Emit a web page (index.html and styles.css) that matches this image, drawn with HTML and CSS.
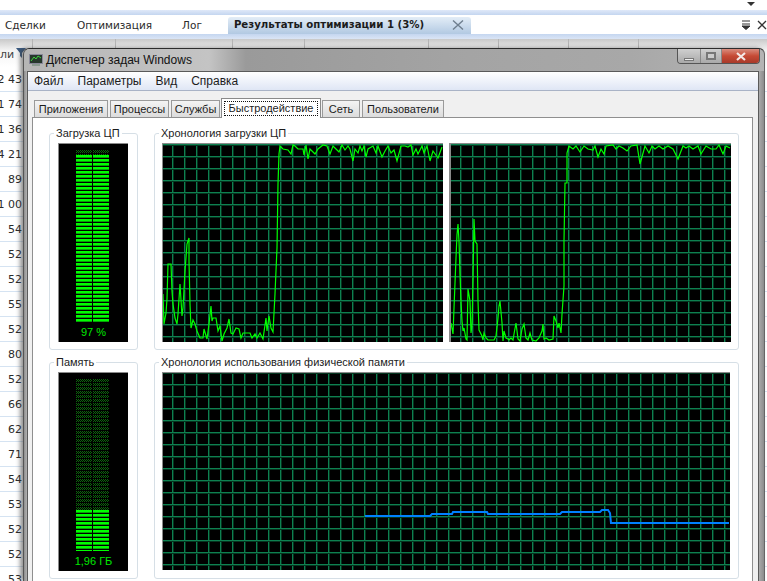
FILE: index.html
```html
<!DOCTYPE html>
<html lang="ru">
<head>
<meta charset="utf-8">
<title>Диспетчер задач Windows</title>
<link rel="stylesheet" href="styles.css">
</head>
<body>
<div class="app">
  <div class="app-top"><span class="tri"></span></div>
  <div class="band"></div>
  <div class="doc-tabs">
    <span class="doc-tab first">Сделки</span>
    <span class="doc-tab second">Оптимизация</span>
    <span class="doc-tab third">Лог</span>
    <span class="doc-tab active">Результаты оптимизации 1 (3%)<svg class="tab-x" width="12" height="10" viewBox="0 0 12 10"><path d="M1 0.5L11 9.5M11 0.5L1 9.5" stroke="#6f7f8f" stroke-width="1.4" fill="none"/></svg></span>
    <span class="doc-tools">
      <svg width="10" height="10" viewBox="0 0 10 10"><path d="M1 1H9M1 4H9M1 6L5 9.5L9 6Z" stroke="#333" fill="#333"/></svg>
      <svg width="10" height="10" viewBox="0 0 10 10"><path d="M1 1L9 9M9 1L1 9" stroke="#333" stroke-width="1.3" fill="none"/></svg>
    </span>
  </div>
  <div class="band lower"></div>
  <div class="thead">
    <span class="th c1"><span class="th-label">ли</span><svg class="filter" width="10" height="10" viewBox="0 0 10 10"><path d="M0 0H10L6 5V10L4 8V5Z"/></svg></span>
    <span class="th c2"><svg class="filter" width="10" height="10" viewBox="0 0 10 10"><path d="M0 0H10L6 5V10L4 8V5Z"/></svg></span>
    <span class="th c3"><svg class="filter" width="10" height="10" viewBox="0 0 10 10"><path d="M0 0H10L6 5V10L4 8V5Z"/></svg></span>
    <span class="th c4"><svg class="filter" width="10" height="10" viewBox="0 0 10 10"><path d="M0 0H10L6 5V10L4 8V5Z"/></svg></span>
    <span class="th c5"><svg class="filter" width="10" height="10" viewBox="0 0 10 10"><path d="M0 0H10L6 5V10L4 8V5Z"/></svg></span>
    <span class="th c6"><svg class="filter" width="10" height="10" viewBox="0 0 10 10"><path d="M0 0H10L6 5V10L4 8V5Z"/></svg></span>
    <span class="th c6"><svg class="filter" width="10" height="10" viewBox="0 0 10 10"><path d="M0 0H10L6 5V10L4 8V5Z"/></svg></span>
    <span class="th c6"><svg class="filter" width="10" height="10" viewBox="0 0 10 10"><path d="M0 0H10L6 5V10L4 8V5Z"/></svg></span>
  </div>
  <div class="rows">
    <div class="row">2 43</div><div class="row">1 74</div><div class="row">1 36</div><div class="row">4 21</div>
    <div class="row">89</div><div class="row">1 00</div><div class="row">54</div><div class="row">52</div>
    <div class="row">52</div><div class="row">55</div><div class="row">52</div><div class="row">80</div>
    <div class="row">52</div><div class="row">66</div><div class="row">62</div><div class="row">71</div>
    <div class="row">54</div><div class="row">53</div><div class="row">52</div><div class="row">52</div>
    <div class="row">53</div>
  </div>
</div>

<div class="window">
  <div class="titlebar">
    <svg class="win-icon" width="14" height="14" viewBox="0 0 14 14"><rect x="0.5" y="1.5" width="13" height="9" fill="#26382c" stroke="#889"/><path d="M2 8L5 4L7 6L9 3L12 5" stroke="#3dd43d" fill="none"/><rect x="3" y="11" width="8" height="2" fill="#8a9a90"/></svg>
    <span class="win-title">Диспетчер задач Windows</span>
    <div class="caption">
      <span class="cap cap-min"><i></i></span>
      <span class="cap cap-max"><i></i></span>
      <span class="cap cap-close"><svg width="12" height="9" viewBox="0 0 12 9"><path d="M2 1L10 8M10 1L2 8" stroke="#f4e8e6" stroke-width="2.2" fill="none"/></svg></span>
    </div>
  </div>
  <div class="client">
    <div class="menubar"><span>Файл</span><span>Параметры</span><span>Вид</span><span>Справка</span></div>
    <div class="tabstrip">
      <span class="tab t1">Приложения</span>
      <span class="tab t2">Процессы</span>
      <span class="tab t3">Службы</span>
      <span class="tab t4 selected"><span class="focus">Быстродействие</span></span>
      <span class="tab t5">Сеть</span>
      <span class="tab t6">Пользователи</span>
    </div>
    <div class="panel">
      <fieldset class="group meter-group">
        <legend>Загрузка ЦП</legend>
        <div class="meter">
          <div class="bars">
            <div class="bar"><div class="dim" style="height:6px"></div><div class="lit"></div></div>
            <div class="bar"><div class="dim" style="height:6px"></div><div class="lit"></div></div>
          </div>
          <div class="meter-value">97 %</div>
        </div>
      </fieldset>
      <fieldset class="group graph-group">
        <legend>Хронология загрузки ЦП</legend>
        <div class="graph-pair">
          <div class="graph cpu one">
            <svg width="280" height="198" viewBox="163 143 280 198"><polyline class="cpu-line" points="163,293 164,323 166,312 167,298 168,263 171,263 172,290 173,303 175,317 177,323 178,313 180,283 182,315 183,307 185,270 187,243 189,237 189,260 190,303 191,327 193,319 195,323 197,330 200,337 203,337 204,328 207,338 209,323 211,305 212,320 213,317 216,317 218,330 220,325 222,340 224,333 227,327 229,318 231,332 233,333 236,327 239,328 241,337 243,332 250,332 252,337 255,333 257,337 260,332 263,338 266,317 267,330 269,315 271,327 273,331 275,293 277,247 278,183 279,153 280,145 283,148 288,149 291,153 293,144 295,145 298,148 303,148 304,154 306,144 308,158 310,148 313,151 315,153 318,148 323,144 327,145 330,153 333,145 336,148 339,151 342,144 345,149 348,145 350,148 353,160 355,148 358,152 360,145 362,150 364,145 366,156 368,148 373,145 376,152 378,145 382,156 385,150 388,145 391,152 394,149 397,160 401,145 405,145 408,146 411,144 413,154 416,148 418,153 422,145 424,152 427,145 430,160 433,150 438,157 442,146"/></svg>
          </div>
          <div class="graph cpu two">
            <svg width="280" height="198" viewBox="450 143 280 198"><polyline class="cpu-line" points="450,322 452,333 453,307 455,257 456,234 457,223 458,240 459,273 460,300 461,320 462,330 463,327 465,338 466,339 467,288 469,300 470,332 471,325 472,280 473,218 474,240 476,243 477,300 478,329 481,335 482,339 483,332 485,337 487,339 493,339 495,335 497,317 498,305 499,300 501,322 502,340 503,330 505,337 507,338 508,339 510,337 512,339 513,333 515,322 517,338 519,340 521,328 523,323 525,337 527,339 529,332 531,339 535,340 538,337 541,330 542,323 543,338 545,337 548,339 552,338 553,315 555,320 557,327 558,322 560,332 561,313 563,285 563,240 564,182 566,182 566,152 568,145 572,148 575,145 579,151 583,145 587,148 592,149 594,145 597,156 600,148 603,153 605,145 612,144 615,148 618,145 622,147 626,150 630,145 636,144 639,163 644,145 648,152 651,145 654,148 658,145 662,148 667,145 672,148 677,158 682,145 685,147 688,145 692,148 697,145 700,153 705,145 710,148 715,148 718,144 722,153 725,145 729,147"/></svg>
          </div>
        </div>
      </fieldset>
      <fieldset class="group meter-group">
        <legend>Память</legend>
        <div class="meter">
          <div class="bars">
            <div class="bar"><div class="dim" style="height:132px"></div><div class="lit"></div></div>
            <div class="bar"><div class="dim" style="height:132px"></div><div class="lit"></div></div>
          </div>
          <div class="meter-value">1,96 ГБ</div>
        </div>
      </fieldset>
      <fieldset class="group graph-group">
        <legend>Хронология использования физической памяти</legend>
        <div class="graph mem">
          <svg width="567" height="197" viewBox="163 373 567 197"><polyline class="mem-line" points="365,516 430,516 432,514 452,514 453,512 487,512 488,514 560,514 562,512 600,512 602,510 608,510 610,513 611,523 729,523"/></svg>
        </div>
      </fieldset>
    </div>
  </div>
</div>
</body>
</html>
```
FILE: styles.css
```css
* { box-sizing: border-box; }
html, body { margin: 0; padding: 0; height: 581px; overflow: hidden; background: #fff; }

/* Background application */
.app { width: 767px; height: 581px; overflow: hidden; font: 11px/14px "DejaVu Sans", sans-serif; color: #2a2a2a; }
.app-top { height: 10px; display: flex; justify-content: flex-end; padding-right: 12px; }
.tri { width: 0; height: 0; margin-top: 2px; border: 4px solid transparent; border-top-color: #333; border-bottom: 0; }
.band { height: 5px; background: linear-gradient(#dfe8f8, #c4d6f0); }
.band.lower { height: 5px; background: linear-gradient(#c4d6f0, #dbe5f5); }
.doc-tabs { height: 19px; display: flex; align-items: stretch; }
.doc-tab { display: flex; align-items: center; font-size: 10.5px; }
.doc-tab.first { margin-left: 5px; }
.doc-tab.second { margin-left: 31px; }
.doc-tab.third { margin-left: 30px; }
.doc-tab.active { margin: 2px 0 0 26px; padding: 0 9px 1px 6px; width: 243px; gap: 28px; font-weight: 700; font-size: 10.2px; color: #1c1c1c; border-radius: 3px 3px 0 0; background: linear-gradient(#e3edf7, #b2c9e2); white-space: nowrap; }
.tab-x { flex: none; }
.doc-tools { margin-left: auto; display: flex; align-items: center; gap: 6px; }
.thead { height: 28px; display: flex; background: linear-gradient(#c9c9c9, #f3f3f3 40%, #fff); }
.th { display: flex; justify-content: flex-end; padding: 9px 4px 0 0; border-right: 1px solid #b5b5b5; }
.c1 { width: 33px; justify-content: space-between; padding-right: 6px; }
.c2 { width: 83px; }
.c3 { width: 117px; }
.c4 { width: 72px; }
.c5 { width: 124px; }
.c6 { width: 70px; }
.filter { flex: none; fill: #3a5a80; }
.th-label { color: #444; }
.row { height: 25px; width: 100%; padding: 6px 745px 0 0; display: flex; justify-content: flex-end; white-space: nowrap; overflow: hidden; border-bottom: 1px solid #d5e3f2; }

/* Window */
.window { position: absolute; left: 23px; top: 48px; width: 742px; height: 533px; padding: 0 5px 0 3px; font: 12px/15px "Liberation Sans", sans-serif; color: #1c1c1c;
  border-top: 1px solid #2c2c2c; border-left: 1px solid #555; border-right: 1px solid #666; border-radius: 6px 6px 0 0;
  background: linear-gradient(90deg, #8f8f8f, #bdbdbd 4px, #b4b4b4 50%, #b9b9b9 99%, #8c8c8c);
  box-shadow: -3px 0 4px rgba(60, 60, 60, .55); }
.titlebar { height: 22px; display: flex; align-items: center; position: relative; margin: 0 -5px 0 -3px; padding-left: 5px; border-radius: 6px 6px 0 0;
  background: linear-gradient(90deg, #b5b5b5, #c4c4c4 25%, #9a9a9a 30%, #a4a4a4 60%, #a8a8a8 82%, #b4b4b4); }
.win-icon { flex: none; }
.win-title { margin-left: 3px; font-size: 12px; color: #111; }
.caption { position: absolute; right: 4px; top: 0; width: 83px; height: 15px; display: flex; border: 1px solid #555; border-top: 0; border-radius: 0 0 4px 4px; overflow: hidden; }
.cap { display: flex; align-items: center; justify-content: center; }
.cap-min { width: 23px; background: linear-gradient(#cfcfcf, #a9a9a9); border-right: 1px solid #888; }
.cap-min i { width: 10px; height: 3px; margin-top: 6px; background: #eee; border: 1px solid #777; }
.cap-max { width: 21px; background: linear-gradient(#cfcfcf, #a9a9a9); border-right: 1px solid #888; }
.cap-max i { width: 10px; height: 8px; background: #ccc; border: 2px solid #777; }
.cap-close { flex: 1; background: linear-gradient(#d98d7e, #c64a35 50%, #a83a2a); }
.client { background: #f0f0f0; border: 1px solid #5a5a5a; border-bottom: 0; height: 510px; }
.menubar { height: 19px; display: flex; gap: 14px; padding: 0 0 0 6px; align-items: center; background: linear-gradient(#fff, #dfe6f5); border-bottom: 1px solid #a9b3c6; }
.menubar span { font-size: 12px; }
.tabstrip { height: 26px; padding: 6px 0 0 6px; display: flex; align-items: flex-end; gap: 2px; }
.tab { height: 17px; display: flex; align-items: center; justify-content: center; font-size: 11px; border: 1px solid #9a9a9a; border-bottom: 0; background: linear-gradient(#f4f4f4, #dcdcdc); }
.t1 { width: 74px; }
.t2 { width: 59px; }
.t3 { width: 49px; }
.t4 { width: 100px; }
.t5 { width: 38px; }
.t6 { width: 82px; }
.tab.selected { height: 20px; margin: 0 -1px -1px -1px; position: relative; z-index: 1; background: #fff; border-color: #8a8a8a; padding: 2px; }
.focus { display: flex; align-items: center; justify-content: center; width: 100%; height: 100%; border: 1px dotted #111; }
.panel { width: 721px; height: 465px; margin-left: 4px; padding: 8px 0 0 16px; background: #fff; border: 1px solid #8f8f8f; border-bottom: 0;
  display: grid; grid-template-columns: 89px 585px; grid-template-rows: 224px 224px; column-gap: 16px; row-gap: 5px; }
.group { margin: 0; min-width: 0; border: 1px solid #d6dfe6; border-radius: 3px; height: 224px; }
.group legend { padding: 0 2px; line-height: 14px; font-size: 11px; white-space: nowrap; }
.meter-group { padding: 3px 0 0 8px; }
.meter-group legend { margin-left: -4px; }
.graph-group { padding: 3px 0 0 7px; }
.graph-group legend { margin-left: -3px; }
.meter { width: 70px; height: 199px; padding: 5px 0 0 17px; background: #000; border-top: 1px solid #8a8a8a; border-left: 1px solid #8a8a8a; }
.bars { display: flex; gap: 1px; height: 173px; }
.bar { width: 16px; display: flex; flex-direction: column; }
.dim { flex: none; background-image: linear-gradient(#000 1px, transparent 1px), repeating-conic-gradient(#0c660c 0 25%, #000 0 50%); background-size: 100% 4px, 2px 2px; }
.lit { flex: 1; background: repeating-linear-gradient(#00ff00 0 2px, #07a007 2px 3px, #000 3px 4px); }
.meter-value { margin: 3px 0 0 -17px; width: 69px; text-align: center; color: #00e800; font-size: 11px; line-height: 15px; }
.graph-pair { display: flex; gap: 6px; }
.graph { background-color: #000; background-image: linear-gradient(#0e8050 1px, #05341f 1px, #05341f 2px, transparent 2px), linear-gradient(90deg, #0e8050 1px, #05341f 1px, #05341f 2px, transparent 2px); background-size: 12px 12px; }
.graph svg { display: block; }
.graph.cpu { height: 199px; border-top: 1px solid #8a8a8a; background-position: 9px 0; }
.graph.cpu.one { width: 281px; border-left: 1px solid #8a8a8a; }
.graph.cpu.two { width: 282px; border-left: 2px solid #8a8a8a; }
.graph.mem { width: 568px; height: 198px; border-top: 1px solid #8a8a8a; border-left: 1px solid #8a8a8a; background-position: 9px 11px; }
.cpu-line { fill: none; stroke: #00ff00; stroke-width: 1.2; }
.mem-line { fill: none; stroke: #0080ff; stroke-width: 2; }
```
